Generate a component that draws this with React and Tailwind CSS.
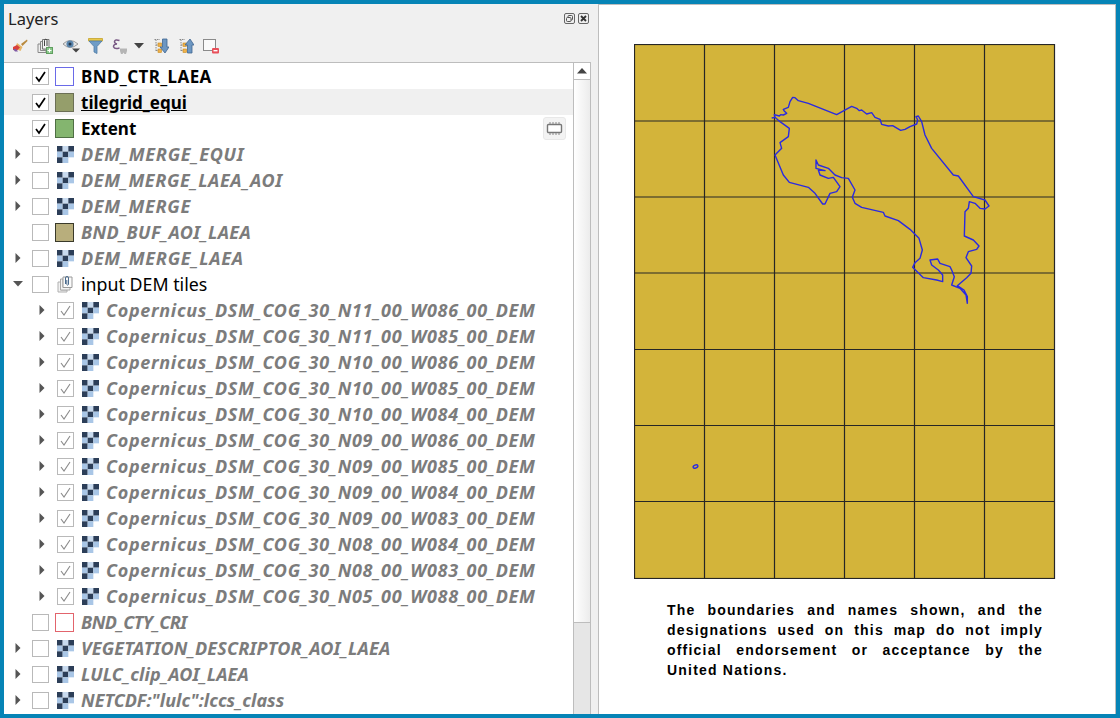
import React from "react";

const z4 = (x, y) => [x / 3 + 106, y / 3 + 36];
const z5 = (x, y) => [x / 3 + 206, y / 3 + 146];
const coast = [
  ...[[95,114],[105,112],[103,104],[118,108],[122,104],[130,105],[140,100],[132,92],[130,88],[145,82],[150,65],[158,52],[165,53],[175,62],[205,70],[290,104],[335,79],[350,85],[358,92],[365,90],[380,102],[395,98],[405,112],[420,118],[425,133],[445,138],[458,137],[468,143],[482,151],[495,148],[510,140],[530,132],[533,120],[528,110],[535,108],[545,125],[555,165],[575,205],[640,285],[655,288],[700,350],[735,360],[747,378]].map(p => z4(...p)),
  ...[[435,57],[420,55],[405,40],[388,35],[385,55],[375,65],[373,138],[400,150],[417,168],[410,178],[385,185],[378,203],[395,228],[393,250],[380,263],[352,287],[372,300],[382,320],[382,340],[378,315],[360,295],[335,285],[343,260],[335,240],[330,230],[300,220],[293,207],[270,210],[275,225],[295,240],[308,255],[308,275],[290,270],[250,263],[218,232],[225,218],[240,205],[247,180],[237,145],[210,118],[175,92],[135,78],[130,67],[65,52],[45,40],[37,22],[43,5]].map(p => z5(...p)),
  ...[[345,330],[325,295],[305,293],[285,285],[265,265],[235,255],[228,240],[228,265],[255,272],[235,270],[240,285],[265,295],[280,292],[300,320],[290,335],[270,340],[255,372],[248,372],[225,340],[205,322],[148,307],[130,285],[105,225],[125,205],[120,188],[145,170],[148,145],[120,125],[105,112]].map(p => z4(...p)),
];
const coastPts = coast.map(p => p.join(",")).join(" ");

const Arrow = ({ open }) =>
  open ? (
    <svg width="10" height="6" viewBox="0 0 10 6"><path d="M0 0H10L5 5.5Z" fill="#555" /></svg>
  ) : (
    <svg width="6" height="10" viewBox="0 0 6 10"><path d="M0.5 0L5.5 5L0.5 10Z" fill="#555" /></svg>
  );

const Check = ({ checked, dim }) => (
  <div className="w-[17px] h-[17px] shrink-0 bg-white border border-[#b9b9b9] flex items-center justify-center">
    {checked && (
      <svg width="13" height="13" viewBox="0 0 13 13">
        <path d="M2 7L5 11L11 2" fill="none" stroke={dim ? "#8a8a8a" : "#000"} strokeWidth={dim ? 1.1 : 1.7} />
      </svg>
    )}
  </div>
);

const Raster = () => (
  <svg width="17" height="17" viewBox="0 0 18 18" className="shrink-0 ml-[8px]">
    <rect width="18" height="18" fill="#fff" />
    <rect x="0" y="0" width="6" height="6" fill="#2c3e58" />
    <rect x="6" y="0" width="6" height="6" fill="#c9dbef" />
    <rect x="12" y="0" width="6" height="6" fill="#2c3e58" />
    <rect x="0" y="6" width="6" height="6" fill="#a9c6e6" />
    <rect x="6" y="6" width="6" height="6" fill="#2c3e58" />
    <rect x="12" y="6" width="6" height="6" fill="#a9c6e6" />
    <rect x="0" y="12" width="6" height="6" fill="#2c3e58" />
    <rect x="6" y="12" width="6" height="6" fill="#a9c6e6" />
  </svg>
);

const Swatch = ({ cls }) => (
  <div className={`w-[19px] h-[19px] shrink-0 ml-[6px] border ${cls}`} />
);

const GroupIcon = () => (
  <svg width="17" height="18" viewBox="0 0 17 18" className="shrink-0 ml-[8px]">
    <path d="M1 7H3.5V15H10V17H1Z" fill="#f2f2f2" stroke="#b0b0b0" />
    <path d="M3.5 4H6V12.5H13V15H3.5Z" fill="#f2f2f2" stroke="#a8a8a8" />
    <path d="M6 2H15V12.5H6Z" fill="#fafafa" stroke="#9a9a9a" />
    <path d="M8.5 9V3A1.5 1.5 0 0 1 11.5 3V9.5A1 1 0 0 1 9.8 9.5V5" fill="none" stroke="#4a6a8c" />
  </svg>
);

const Chip = () => (
  <div className="w-[23px] h-[23px] ml-auto mr-[7px] rounded-[3px] bg-[#f3f3f3] border border-[#e8e8e8] flex items-center justify-center">
    <svg width="17" height="15" viewBox="0 0 17 15">
      <rect x="1.5" y="3.5" width="14" height="8" rx="1" fill="#fff" stroke="#777" strokeWidth="1.4" />
      <path d="M4 1V3M7 1V3M10 1V3M13 1V3M4 12V14M7 12V14M10 12V14M13 12V14" stroke="#888" strokeWidth="1" />
    </svg>
  </div>
);

const ToolBrush = () => (
  <svg width="16" height="16" viewBox="0 0 16 16">
    <path d="M9 6L15 1.5L15.5 3L10.5 8Z" fill="#b98a3e" />
    <path d="M5 5L10.5 9L8.5 13L3 10.5Z" fill="#e6b566" />
    <path d="M1 9L5 7L8 9.5L5 12.5L1 12Z" fill="#d9403c" />
    <path d="M1 11L4 11L6 13.5L3 13.5Z" fill="#7d5ba6" />
  </svg>
);
const ToolAdd = () => (
  <svg width="16" height="16" viewBox="0 0 16 16">
    <path d="M1 6H3.5V12H9V14.5H1Z" fill="#eee" stroke="#888" />
    <path d="M3.5 3.5H5.5V11H11V12.5H3.5Z" fill="#eee" stroke="#888" />
    <path d="M5.5 1.5H12V11H5.5Z" fill="#f5f5f5" stroke="#777" />
    <path d="M7.5 8V2.5A1.2 1.2 0 0 1 10 2.5V8" fill="none" stroke="#444" />
    <rect x="9.5" y="9.5" width="6" height="6" fill="#8bc78b" stroke="#5f9f5f" />
    <path d="M12.5 10.5V14.5M10.5 12.5H14.5" stroke="#fff" />
  </svg>
);
const ToolEye = () => (
  <svg width="18" height="16" viewBox="0 0 18 16">
    <path d="M1 6Q8 -1 16 6Q8 13 1 6Z" fill="#e6e6e6" stroke="#999" />
    <circle cx="8" cy="6" r="3.6" fill="#5b86ad" />
    <circle cx="8" cy="6" r="1.5" fill="#24384d" />
    <path d="M10 10.5H18L14 14.5Z" fill="#444" />
  </svg>
);
const ToolFilter = () => (
  <svg width="15" height="16" viewBox="0 0 15 16">
    <path d="M0.5 0.5H14.5V3H0.5Z" fill="#e8c84a" stroke="#c4a22a" strokeWidth="0.8" />
    <path d="M1 3H14L9 8.5V15.5L6 14V8.5Z" fill="#6f9cc6" stroke="#4f7ca6" strokeWidth="0.8" />
  </svg>
);
const ToolExpr = () => (
  <svg width="16" height="16" viewBox="0 0 16 16">
    <path d="M7.5 2.5Q3 1 2.5 3.5Q2.5 5.5 5 6Q1.5 6 1.5 8.8Q2.5 11.5 7.5 10" fill="none" stroke="#7a5a85" strokeWidth="1.5" />
    <path d="M8 10.5H15V13L14 16H12.5L11.5 14.5L10.5 16H9L8 13Z" fill="#b5b5b5" />
  </svg>
);
const ToolDrop = () => (
  <svg width="10" height="6" viewBox="0 0 10 6"><path d="M0 0H10L5 5.5Z" fill="#444" /></svg>
);
const TreeBits = () => (
  <g>
    <path d="M1.5 1.5H7M3 1.5V13M3 7H6M3 12.5H6" stroke="#888" fill="none" strokeDasharray="1.5 1" />
    <rect x="5" y="5" width="3.5" height="3.5" fill="#f0b14a" stroke="#c58a20" strokeWidth="0.6" />
    <rect x="5" y="11" width="3.5" height="3.5" fill="#f0b14a" stroke="#c58a20" strokeWidth="0.6" />
  </g>
);
const ToolExpand = () => (
  <svg width="16" height="16" viewBox="0 0 16 16">
    <TreeBits />
    <path d="M9.5 1V9H7L12 15L16 9H14V1Z" fill="#6d97c2" stroke="#3f6690" strokeWidth="0.8" />
  </svg>
);
const ToolCollapse = () => (
  <svg width="16" height="16" viewBox="0 0 16 16">
    <TreeBits />
    <path d="M9.5 15V7H7L12 1L16 7H14V15Z" fill="#6d97c2" stroke="#3f6690" strokeWidth="0.8" />
  </svg>
);
const ToolRemove = () => (
  <svg width="16" height="16" viewBox="0 0 16 16">
    <rect x="0.5" y="1.5" width="12" height="11" fill="#fafafa" stroke="#8a8a8a" />
    <rect x="9" y="10" width="7" height="5.5" rx="1" fill="#e8505a" />
    <path d="M10.5 12.7H14.5" stroke="#fff" strokeWidth="1.4" />
  </svg>
);

const GrayName = ({ track = "tracking-[0.68px]", children }) => (
  <span className={`font-bold italic text-[#7c7c7c] whitespace-nowrap text-[18px] ${track}`}>{children}</span>
);

const topRows = [
  { arrow: true, name: "DEM_MERGE_EQUI", track: "tracking-[0.7px]" },
  { arrow: true, name: "DEM_MERGE_LAEA_AOI", track: "tracking-[0.6px]" },
  { arrow: true, name: "DEM_MERGE", track: "tracking-[0.65px]" },
  { swatch: "bg-[#b8ae7c] border-[#3a3a2a]", name: "BND_BUF_AOI_LAEA", track: "tracking-[0.35px]" },
  { arrow: true, name: "DEM_MERGE_LAEA", track: "tracking-[0.7px]" },
];
const tiles = [
  "N11_00_W086", "N11_00_W085", "N10_00_W086", "N10_00_W085", "N10_00_W084", "N09_00_W086",
  "N09_00_W085", "N09_00_W084", "N09_00_W083", "N08_00_W084", "N08_00_W083", "N05_00_W088",
];
const bottomRows = [
  { swatch: "bg-white border-[#e2646c]", name: "BND_CTY_CRI", track: "tracking-[-0.5px]" },
  { arrow: true, name: "VEGETATION_DESCRIPTOR_AOI_LAEA", track: "tracking-[0.17px]" },
  { arrow: true, name: "LULC_clip_AOI_LAEA", track: "tracking-[0.1px]" },
  { arrow: true, name: 'NETCDF:"lulc":lccs_class', track: "tracking-[0px]" },
];

const RowBase = ({ arrow, open, check, dim, icon, children, extra, hi, child }) => (
  <div className={`h-[26px] shrink-0 flex items-center ${hi ? "bg-[#f0f0f0]" : ""}`}>
    <div className={`shrink-0 flex items-center justify-center ${child ? "w-[53px] pl-[23px]" : "w-[28px]"}`}>
      {arrow && <Arrow open={open} />}
    </div>
    <Check checked={check} dim={dim} />
    <div className="w-[32px] shrink-0 flex justify-start">{icon}</div>
    <div>{children}</div>
    {extra}
  </div>
);

const L = ({ track = "", children }) => <span className={`font-bold text-black whitespace-nowrap text-[17px] ${track}`}>{children}</span>;

const H = [77, 153, 229, 305.5, 381.5, 457.5];
const V = [70, 140, 210, 280, 350];

export default function App() {
  return (
    <div className="w-[1120px] h-[718px] overflow-hidden border-4 border-[#0684b6] flex bg-[#f0f0f0] text-[17.5px] font-['Noto_Sans','Open_Sans',sans-serif]">
      <div className="w-[594px] h-full flex flex-col shrink-0">
        <div className="h-[31px] shrink-0 flex items-center justify-between pl-[4px] pr-[9px]">
          <span className="text-[16.5px] text-[#222]">Layers</span>
          <div className="flex items-center gap-[3px] mb-[3px]">
            <svg width="11" height="11" viewBox="0 0 11 11">
              <rect x="0.5" y="0.5" width="10" height="10" rx="1.5" fill="#eee" stroke="#666" />
              <rect x="4" y="2.5" width="4.5" height="4.5" rx="1" fill="none" stroke="#555" />
              <rect x="2.5" y="4.5" width="4.5" height="4" rx="1" fill="#eee" stroke="#555" />
            </svg>
            <svg width="11" height="11" viewBox="0 0 11 11">
              <rect x="0.5" y="0.5" width="10" height="10" rx="1.5" fill="#eee" stroke="#666" />
              <path d="M3 3L8 8M8 3L3 8" stroke="#333" strokeWidth="1.8" />
            </svg>
          </div>
        </div>
        <div className="h-[27px] shrink-0 flex items-center pl-[8px] pb-[5px] gap-[9px]">
          <ToolBrush />
          <ToolAdd />
          <ToolEye />
          <div className="ml-[-1px]"><ToolFilter /></div>
          <ToolExpr />
          <div className="ml-[-3px]"><ToolDrop /></div>
          <ToolExpand />
          <ToolCollapse />
          <ToolRemove />
        </div>
        <div className="flex-1 min-h-0 mr-[7px] flex border-t border-r border-[#bdbdbd]">
          <div className="w-[569px] shrink-0 bg-white flex flex-col overflow-hidden">
            <RowBase check icon={<Swatch cls="bg-white border-[#6a6ae8]" />}><L track="tracking-[0.4px]">BND_CTR_LAEA</L></RowBase>
            <RowBase check hi icon={<Swatch cls="bg-[#959e6b] border-[#6b6f55]" />}><span className="underline"><L>tilegrid_equi</L></span></RowBase>
            <RowBase check icon={<Swatch cls="bg-[#84b56f] border-[#4f6f44]" />} extra={<Chip />}><L>Extent</L></RowBase>
            {topRows.map(r => (
              <RowBase key={r.name} arrow={r.arrow} icon={r.swatch ? <Swatch cls={r.swatch} /> : <Raster />}>
                <GrayName track={r.track}>{r.name}</GrayName>
              </RowBase>
            ))}
            <RowBase arrow open icon={<GroupIcon />}><span className="text-black whitespace-nowrap text-[17.8px]">input DEM tiles</span></RowBase>
            {tiles.map(t => (
              <RowBase key={t} child arrow check dim icon={<Raster />}>
                <GrayName>{`Copernicus_DSM_COG_30_${t}_00_DEM`}</GrayName>
              </RowBase>
            ))}
            {bottomRows.map(r => (
              <RowBase key={r.name} arrow={r.arrow} icon={r.swatch ? <Swatch cls={r.swatch} /> : <Raster />}>
                <GrayName track={r.track}>{r.name}</GrayName>
              </RowBase>
            ))}
          </div>
          <div className="w-[17px] shrink-0 border-l border-[#bdbdbd] flex flex-col bg-[#e6e6e6]">
            <div className="h-[17px] shrink-0 bg-white border-b border-[#bdbdbd] flex items-center justify-center">
              <svg width="10" height="6" viewBox="0 0 10 6"><path d="M0 5.5H10L5 0Z" fill="#444" /></svg>
            </div>
            <div className="h-[543px] shrink-0 bg-gradient-to-r from-white to-[#ececec] border-b border-[#bdbdbd]" />
          </div>
        </div>
      </div>
      <div className="flex-1 min-w-0 h-full bg-white border-l border-t border-r border-[#bdbdbd] flex flex-col items-start pl-[35px] pt-[39px]">
        <svg width="422" height="535" viewBox="0 0 422 535" className="shrink-0">
          <rect x="0.5" y="0.5" width="420" height="534" fill="#d3b43a" stroke="#262626" strokeWidth="1.2" />
          {V.map(x => <line key={x} x1={x + 0.5} x2={x + 0.5} y1="0" y2="535" stroke="#262626" strokeWidth="1.2" />)}
          {H.map(y => <line key={y} y1={y} y2={y} x1="0" x2="421" stroke="#262626" strokeWidth="1.2" />)}
          <polyline points={coastPts} fill="none" stroke="#2a2ae0" strokeWidth="1.4" strokeLinejoin="round" />
          <ellipse cx="61.5" cy="422.5" rx="2.5" ry="1.5" fill="#d3b43a" stroke="#2a2ae0" strokeWidth="1.4" transform="rotate(-25 61.5 422.5)" />
        </svg>
        <div className="ml-[33px] mt-[21px] w-[376px] text-[14px] leading-[20px] font-bold text-black tracking-[1.2px] font-['Liberation_Sans',sans-serif]">
          {["The boundaries and names shown, and the", "designations used on this map do not imply", "official endorsement or acceptance by the"].map(t => (
            <div key={t} className="whitespace-nowrap text-justify [text-align-last:justify]">{t}</div>
          ))}
          <div>United Nations.</div>
        </div>
      </div>
    </div>
  );
}
